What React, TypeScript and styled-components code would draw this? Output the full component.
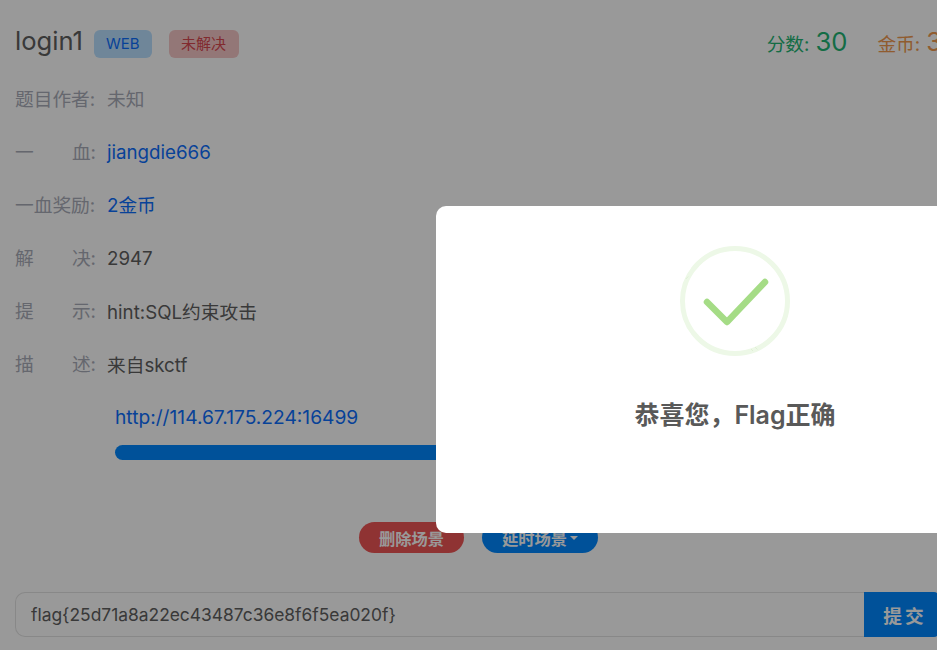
import React from "react";
import styled, { createGlobalStyle } from "styled-components";

const Global = createGlobalStyle`
  html, body { margin: 0; padding: 0; height: 100%; overflow: hidden; background: #fff; }
  body { font-family: Inter, "Noto Sans CJK SC", sans-serif; color: #606060; }
`;

const Page = styled.div`
  width: 938px;
  height: 650px;
  box-sizing: border-box;
  padding: 0 0 0 15px;
  display: flex;
  flex-direction: column;
`;
const Header = styled.header`
  height: 73px;
  box-sizing: border-box;
  padding-top: 11px;
  display: flex;
  align-items: center;
  justify-content: space-between;
`;
const TitleGroup = styled.div`
  display: flex;
  align-items: center;
`;
const Title = styled.h1`
  margin: 0 11px 2px 0;
  font-size: 25.6px;
  font-weight: 400;
  line-height: 30px;
`;
const Badge = styled.span<{ $bg: string; $fg: string }>`
  height: 28px;
  padding: 0 12.5px;
  margin: 4px 17px 0 0;
  display: flex;
  align-items: center;
  border-radius: 6px;
  font-size: 15px;
  line-height: 24px;
  background: ${(p) => p.$bg};
  color: ${(p) => p.$fg};
  &:first-of-type {
    padding: 0 12px;
  }
`;
const Stats = styled.div`
  display: flex;
  align-items: baseline;
  gap: 30px;
  margin: 0 -4px 2px 0;
`;
const Stat = styled.span<{ $fg: string }>`
  font-size: 18.72px;
  color: ${(p) => p.$fg};
  b {
    font-size: 25.6px;
    font-weight: 400;
    margin-left: 6px;
  }
`;
const Row = styled.div`
  height: 53px;
  display: flex;
  align-items: center;
  font-size: 18.72px;
`;
const Label = styled.span`
  width: 81px;
  margin: 0 11px 4px 0;
  color: #a9acb8;
  display: flex;
  justify-content: space-between;
`;
const Value = styled.span<{ $fg?: string; $lift: number }>`
  color: ${(p) => p.$fg || "#606060"};
  margin-bottom: ${(p) => p.$lift}px;
`;
const Scene = styled.div`
  margin: 15px 0 0 100px;
  display: flex;
  flex-direction: column;
`;
const SceneLink = styled.a`
  font-size: 19.2px;
  line-height: 22px;
  color: #0d6efd;
  text-decoration: none;
`;
const Bar = styled.div`
  margin-top: 17px;
  height: 15px;
  width: 600px;
  border-radius: 8px;
  background: #0088ff;
`;
const Actions = styled.div`
  margin-top: 62px;
  display: flex;
  justify-content: center;
  gap: 18px;
  padding-left: 4px;
`;
const Pill = styled.button<{ $bg: string }>`
  height: 31px;
  border: 0;
  border-radius: 16px;
  padding: 0 20px;
  font: 700 16.25px Inter, "Noto Sans CJK SC", sans-serif;
  color: #fff;
  background: ${(p) => p.$bg};
  display: flex;
  align-items: center;
  gap: 3px;
`;
const Caret = styled.i`
  width: 0;
  height: 0;
  border-left: 4px solid transparent;
  border-right: 4px solid transparent;
  border-top: 4px solid #fff;
`;
const FlagForm = styled.form`
  margin-top: 39px;
  display: flex;
  height: 45px;
`;
const FlagInput = styled.input`
  flex: 1;
  min-width: 0;
  box-sizing: border-box;
  padding: 0 15px;
  border: 1px solid #e3e3e3;
  border-right: 0;
  border-radius: 10px 0 0 10px;
  font: 400 17.4px Inter, "Noto Sans CJK SC", sans-serif;
  color: #606060;
  outline: none;
  background: #fff;
`;
const Submit = styled.button`
  width: 74px;
  padding: 0 0 0 8px;
  border: 0;
  border-radius: 0 4px 4px 0;
  background: #0088ff;
  color: #fff;
  font: 700 18.72px Inter, "Noto Sans CJK SC", sans-serif;
  letter-spacing: 3px;
`;
const Overlay = styled.div`
  position: fixed;
  inset: 0;
  background: rgba(0, 0, 0, 0.4);
`;
const Modal = styled.div`
  position: absolute;
  left: 436px;
  top: 206px;
  width: 600px;
  height: 327px;
  box-sizing: border-box;
  padding-top: 40px;
  background: #fff;
  border-radius: 10px;
  display: flex;
  flex-direction: column;
  align-items: center;
`;
const ModalIcon = styled.svg`
  width: 110px;
  height: 110px;
  margin-left: -2px;
`;
const ModalTitle = styled.h2`
  margin: 41px 0 0 -2px;
  font-size: 25px;
  line-height: 36px;
  font-weight: 600;
  color: #595959;
`;

const rows: [string[], string, string | undefined, number][] = [
  [["题目作者:"], "未知", "#a9acb8", 4],
  [["一", "血:"], "jiangdie666", "#0d6efd", 0],
  [["一血奖励:"], "2金币", "#0d6efd", 4],
  [["解", "决:"], "2947", undefined, 0],
  [["提", "示:"], "hint:SQL约束攻击", undefined, 3],
  [["描", "述:"], "来自skctf", undefined, 3],
];

export default function App() {
  return (
    <>
      <Global />
      <Page>
        <Header>
          <TitleGroup>
            <Title>login1</Title>
            <Badge $bg="#b9e0ff" $fg="#0d6efd">WEB</Badge>
            <Badge $bg="#f6c6c6" $fg="#d8484f">未解决</Badge>
          </TitleGroup>
          <Stats>
            <Stat $fg="#22b573">分数:<b>30</b></Stat>
            <Stat $fg="#f0994f">金币:<b>3</b></Stat>
          </Stats>
        </Header>
        {rows.map(([label, value, color, lift]) => (
          <Row key={label.join("")}>
            <Label>
              {label.map((t) => (
                <span key={t}>{t}</span>
              ))}
            </Label>
            <Value $fg={color} $lift={lift}>{value}</Value>
          </Row>
        ))}
        <Scene>
          <SceneLink href="#">http://114.67.175.224:16499</SceneLink>
          <Bar />
        </Scene>
        <Actions>
          <Pill type="button" $bg="#ef5555">删除场景</Pill>
          <Pill type="button" $bg="#0088ff">延时场景<Caret /></Pill>
        </Actions>
        <FlagForm onSubmit={(e) => e.preventDefault()}>
          <FlagInput readOnly value="flag{25d71a8a22ec43487c36e8f6f5ea020f}" />
          <Submit type="button">提交</Submit>
        </FlagForm>
      </Page>
      <Overlay />
      <Modal>
        <ModalIcon viewBox="0 0 110 110">
          <circle cx="55" cy="55" r="52.5" fill="none" stroke="#edf8e7" strokeWidth="5" />
          <path d="M5.800 33 L8.200 30.500 M75 101 L77.500 103.500 M71 103 L73 105" fill="none" stroke="#d5ebc9" strokeWidth="0.6" />
          <path d="M27 56 L47 76 L85 36" fill="none" stroke="#a5dc86" strokeWidth="6.5" strokeLinecap="round" strokeLinejoin="round" />
        </ModalIcon>
        <ModalTitle>恭喜您，Flag正确</ModalTitle>
      </Modal>
    </>
  );
}
